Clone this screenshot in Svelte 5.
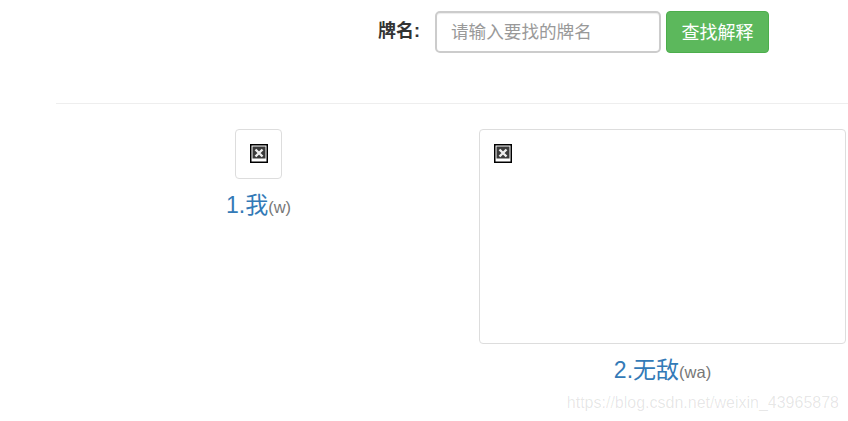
<script>
  const items = [
    { n: '1.我', p: '(w)', big: false },
    { n: '2.无敌', p: '(wa)', big: true }
  ];
</script>

<div class="page">
  <form class="search" onsubmit={(e) => e.preventDefault()}>
    <label for="pai">牌名:</label>
    <input id="pai" placeholder="请输入要找的牌名" />
    <button type="submit">查找解释</button>
  </form>
  <hr />
  <div class="cards">
    {#each items as item}
      <div class="card" class:big={item.big}>
        <div class="thumb">
          <svg class="broken" width="18" height="19" viewBox="0 0 18 19" aria-hidden="true">
            <rect width="18" height="19" fill="#000" />
            <rect x="1.5" y="1.5" width="15" height="16" fill="#fff" />
            <rect x="2.5" y="2.5" width="13" height="12" fill="#3a3a3a" />
            <path d="M5.5 5.5l7 7M12.5 5.5l-7 7" stroke="#eee" stroke-width="2.4" fill="none" />
          </svg>
        </div>
        <div class="caption"><a href="#x">{item.n}</a><span>{item.p}</span></div>
      </div>
    {/each}
  </div>
  <div class="mark">https://blog.csdn.net/weixin_43965878</div>
</div>

<style>
  :global(body) {
    margin: 0;
    background: #fff;
    overflow: hidden;
  }
  .page {
    position: relative;
    width: 848px;
    height: 421px;
    overflow: hidden;
    font-family: "Liberation Sans", "Noto Sans CJK SC", sans-serif;
    padding-left: 56px;
    box-sizing: border-box;
  }
  .search {
    display: flex;
    align-items: center;
    height: 64px;
    padding-left: 322px;
  }
  label {
    font-size: 18px;
    font-weight: 700;
    color: #333;
    width: 57px;
    margin-top: -6px;
  }
  input {
    width: 226px;
    height: 42px;
    box-sizing: border-box;
    border: 2px solid #ccc;
    border-radius: 5px;
    padding: 0 15px 0 14px;
    font: 17.6px "Liberation Sans", "Noto Sans CJK SC", sans-serif;
    color: #555;
    box-shadow: inset 0 1px 1px rgba(0,0,0,.075);
    outline: none;
  }
  input::placeholder {
    color: #999;
    opacity: 1;
  }
  button {
    margin-left: 5px;
    width: 103px;
    height: 42px;
    border: 1px solid #4cae4c;
    border-radius: 4px;
    background: #5cb85c;
    color: #fff;
    font: 18px "Liberation Sans", "Noto Sans CJK SC", sans-serif;
    padding: 0 0 2px;
  }
  hr {
    margin: 39px 0 0;
    border: 0;
    border-top: 1px solid #eee;
  }
  .cards {
    display: flex;
    padding-top: 25px;
  }
  .card {
    width: 405px;
    display: flex;
    flex-direction: column;
    align-items: center;
  }
  .card.big {
    width: 367px;
    margin-left: 18px;
  }
  .thumb {
    width: 47px;
    height: 50px;
    box-sizing: border-box;
    border: 1px solid #ddd;
    border-radius: 4px;
    padding: 14px;
  }
  .big .thumb {
    width: 367px;
    height: 215px;
  }
  .broken {
    display: block;
  }
  .caption {
    margin-top: 10px;
    line-height: 32px;
    white-space: nowrap;
  }
  a {
    font-size: 23px;
    color: #337ab7;
    text-decoration: none;
  }
  span {
    font-size: 16.5px;
    color: #777;
  }
  .mark {
    position: absolute;
    right: 9px;
    bottom: 9px;
    font-size: 16px;
    color: rgba(0,0,0,.1);
  }
</style>
